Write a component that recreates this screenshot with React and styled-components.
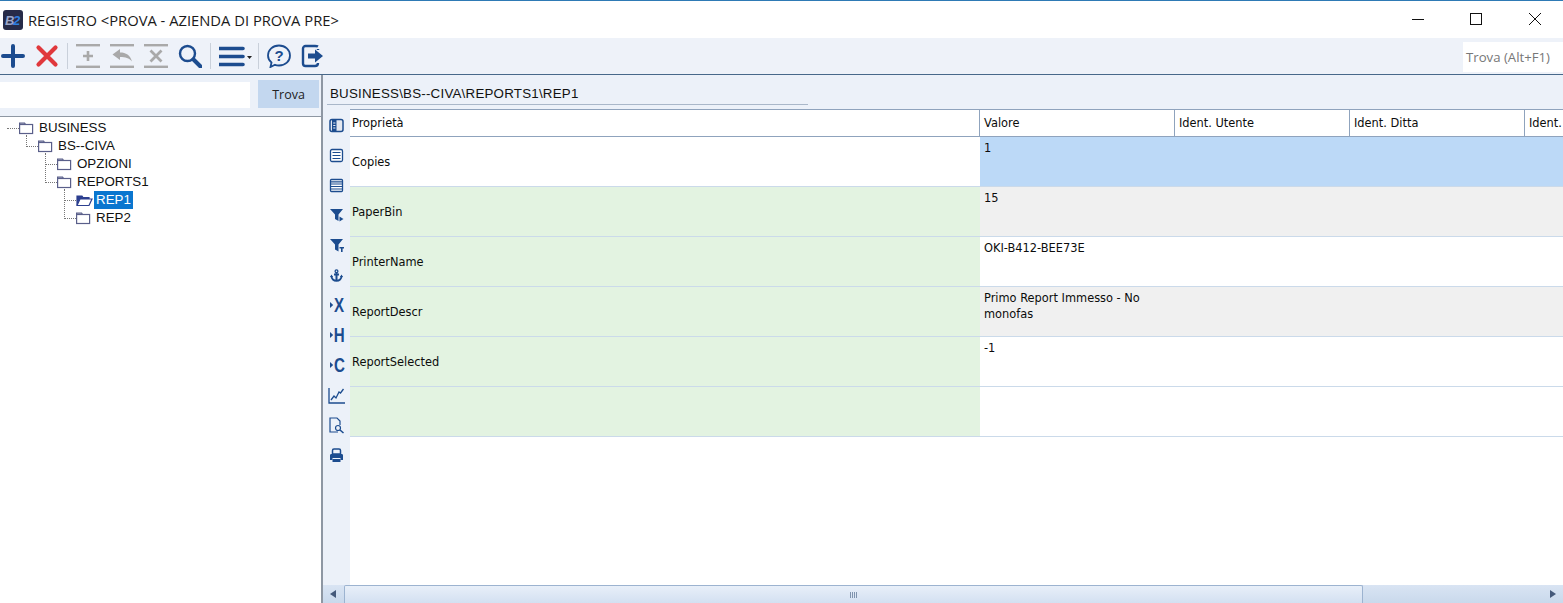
import React from "react";
import styled, { createGlobalStyle } from "styled-components";

const Global = createGlobalStyle`
  html, body { margin: 0; padding: 0; background: #fff; }
  * { box-sizing: border-box; }
`;
const Page = styled.div`
  width: 1563px; height: 603px; overflow: hidden; display: flex; flex-direction: column;
  background: #fff; border-top: 1px solid #2e7ab5; font-family: "Liberation Sans", sans-serif; color: #111;
`;
const TitleBar = styled.header`
  height: 37px; flex: none; display: flex; align-items: center; padding-left: 3px; background: #fff;
`;
const Logo = styled.svg`width: 20px; height: 20px; flex: none; margin-top: 1px;`;
const Title = styled.div`
  margin-left: 5px; font: 14.75px "Open Sans", sans-serif; color: #1a1a1a; flex: 1; white-space: nowrap;
`;
const WinBtn = styled.svg`width: 58px; height: 14px; flex: none; margin-top: -1px;`;
const Toolbar = styled.div`
  height: 37px; flex: none; display: flex; align-items: center; background: #eef2f9;
  border-bottom: 1px solid #47688a; position: relative;
`;
const Group = styled.div`display: flex; margin-left: ${p => p.$ml || 0}px;`;
const Tool = styled.div`
  width: ${p => p.$w || 34}px; height: 36px; display: flex; align-items: center; justify-content: center; flex: none;
`;
const Sep = styled.div`width: 1px; height: 26px; background: #c9d0da; flex: none; margin: 0 ${p => p.$m ?? 3}px;`;
const FindBox = styled.div`
  margin-left: auto; width: 100px; height: 30px; background: #fff; color: #777;
  font: 13.2px "Open Sans", sans-serif; padding: 6px 3px; white-space: nowrap; align-self: flex-start; margin-top: 4px;
`;
const Main = styled.div`flex: 1; min-height: 0; display: flex;`;
const Left = styled.aside`
  width: 323px; flex: none; display: flex; flex-direction: column; border-right: 2px solid #8e97a3; background: #fff;
`;
const SearchRow = styled.div`
  height: 42px; flex: none; background: #ecf1f9; border-bottom: 1px solid #8e97a3; display: flex; align-items: flex-start;
  padding-top: 5px;
`;
const SearchInput = styled.div`width: 250px; height: 26px; margin-top: 2px; background: #fff;`;
const TrovaBtn = styled.div`
  width: 61px; height: 28px; margin-left: 8px; background: #c3d7ef; color: #222;
  font: 12.5px "Open Sans", sans-serif; display: flex; align-items: center; justify-content: center; padding-top: 1px;
`;
const Tree = styled.div`padding: 2px 0 0; flex: 1;`;
const Node = styled.div`
  position: relative; height: 18px; display: flex; align-items: center; padding-left: ${p => 19 + p.$lvl * 19}px;
`;
const Connector = styled.span`
  position: absolute; left: ${p => (p.$lvl === 0 ? 7 : 7 + p.$lvl * 19)}px; width: 12px;
  bottom: 8px; height: ${p => p.$reach}px; border-bottom: 1px dotted #777;
  border-left: ${p => (p.$lvl === 0 ? "none" : "1px dotted #777")};
`;
const Label = styled.span`
  font-size: 13.33px; line-height: 18px; padding: 0 2px 0 ${p => (p.$sel ? 2 : 0)}px;
  margin-left: ${p => (p.$sel ? 1 : 3)}px; white-space: nowrap;
  background: ${p => (p.$sel ? "#0a76cf" : "transparent")}; color: ${p => (p.$sel ? "#fff" : "#111")};
`;
const Right = styled.section`flex: 1; min-width: 0; display: flex; flex-direction: column; background: #ecf1f9;`;
const PathRow = styled.div`height: 34px; flex: none; padding: 10px 0 0 4px;`;
const PathText = styled.div`
  width: 481px; height: 20px; border-bottom: 1px solid #a9b7c9; font-size: 13.33px; line-height: 18px;
  padding-left: 3px; color: #111; letter-spacing: 0.22px;
`;
const Body = styled.div`flex: 1; min-height: 0; display: flex; position: relative;`;
const Side = styled.div`width: 27px; flex: none; display: flex; flex-direction: column; padding-top: 1px;`;
const SideBtn = styled.div`height: 30px; display: flex; align-items: center; justify-content: center; flex: none;`;
const Sheet = styled.div`flex: 1; min-width: 0; background: #fff; overflow: hidden; font: 11.4px "DejaVu Sans", sans-serif; color: #0c0c0c;`;
const Row = styled.div`display: grid; grid-template-columns: 630px 195px 175px 175px 38px; width: 1213px;`;
const HeadRow = styled(Row)`height: 28px; border-top: 1px solid #8fa3bd; border-bottom: 1px solid #8fa3bd; background: #fff;`;
const HeadCell = styled.div`
  line-height: 26px; border-right: ${p => (p.$last ? "none" : "1px solid #8fa3bd")}; white-space: nowrap; padding-left: ${p => (p.$first ? 2 : 4)}px;
`;
const DataRow = styled(Row)`height: 50px; border-bottom: 1px solid #cbdaea;`;
const Prop = styled.div`
  background: ${p => (p.$plain ? "#fff" : "#e3f3e1")}; padding-left: 2px; display: flex; align-items: center;
`;
const Val = styled.div`
  grid-column: 2 / -1; background: ${p => p.$bg}; padding: 3px 0 0 4px; line-height: 16px;
  display: grid; grid-template-columns: 185px;
`;
const Scroll = styled.div`
  position: absolute; left: 0; right: 0; bottom: 0; height: 18px; background: linear-gradient(#d9e4f3, #c9d9ec);
  display: flex; align-items: center;
`;
const ArrowBtn = styled.svg`width: 21px; height: 18px; flex: none; margin-left: ${p => (p.$end ? "auto" : 0)};`;
const Thumb = styled.div`
  width: 1019px; height: 18px; border: 1px solid #9cb3d0; border-bottom: none; border-radius: 2px 2px 0 0;
  background: linear-gradient(#e8eff9, #d3e0f1); display: flex; align-items: center; justify-content: center; gap: 1px;
`;
const Grip = styled.i`width: 1px; height: 6px; background: #7f93ad; display: block;`;
const FolderSvg = styled.svg`width: 17px; height: 14px; flex: none;`;

const B = "#1c4c8f", G = "#a9a9a9";

const Svg = ({ s = 24, children }) => (
  <svg width={s} height={s} viewBox="0 0 24 24">{children}</svg>
);
const Rails = () => (<><rect x="0" y="0" width="24" height="2.4" fill={G} /><rect x="0" y="21.6" width="24" height="2.4" fill={G} /></>);

const tb = {
  plus: <Svg><path d="M12 2v20M2 12h20" stroke={B} strokeWidth="4" strokeLinecap="round" /></Svg>,
  del: <Svg><path d="M3.5 3.5l17 17M20.5 3.5l-17 17" stroke="#e0383c" strokeWidth="4.2" strokeLinecap="round" /></Svg>,
  add: <Svg><Rails /><path d="M12 7v10M7 12h10" stroke={G} strokeWidth="2.6" /></Svg>,
  undo: <Svg><Rails /><path d="M2.5 10.500L10 5v3.500c6 0 10 2.500 12 9-3-3.500-6.500-4.500-12-4.500V16z" fill={G} /></Svg>,
  cancel: <Svg><Rails /><path d="M6.500 6.500l11 11M17.500 6.500l-11 11" stroke={G} strokeWidth="2.800" /></Svg>,
  search: <Svg><circle cx="9.500" cy="9.500" r="7.500" fill="none" stroke={B} strokeWidth="2.400" /><path d="M15.500 15.500l7 7" stroke={B} strokeWidth="4" strokeLinecap="round" /></Svg>,
  help: <Svg><path d="M12 1.500c6.300 0 11 4.300 11 10s-4.700 10-11 10c-1.500 0-2.800-.2-4-.7L3.500 23l1-4.500C2.300 16.700 1 14.300 1 11.500c0-5.700 4.700-10 11-10z" fill="none" stroke={B} strokeWidth="1.800" /><text x="12" y="17" textAnchor="middle" fontFamily="Liberation Sans" fontWeight="700" fontSize="15" fill={B}>?</text></Svg>,
  exit: <Svg><path d="M14 2H4.500A2.500 2.500 0 0 0 2 4.500v15A2.500 2.500 0 0 0 4.500 22H14c2 0 3-1 3-3" fill="none" stroke={B} strokeWidth="2.400" /><path d="M17 2.500c-.5-.3-1.500-.5-3-.5M17 5v1" stroke={B} strokeWidth="2.400" fill="none" /><path d="M7 9.500h7V5.500l8 6.500-8 6.500v-4H7z" fill={B} /></Svg>,
};

const Letter = ({ c, x }) => (
  <svg width="26" height="26" viewBox="0 0 26 26">
    <path d="M6 10l3.200 3L6 16z" fill={B} />
    <text x={x} y="20" transform="scale(.72 1)" fontFamily="Liberation Sans" fontWeight="700" fontSize="21" fill={B}>{c}</text>
  </svg>
);

const side = [
  <svg width="15" height="15" viewBox="0 0 15 15"><rect x="1" y="1.500" width="13" height="12" rx="2" fill="#e4e8f0" stroke={B} strokeWidth="1.500" /><rect x="3" y="2" width="4.500" height="11" fill={B} /><path d="M4.200 5h2.200M4.200 7.500h2.200M4.200 10h2.200" stroke="#e9eef7" /></svg>,
  <svg width="15" height="15" viewBox="0 0 15 15"><rect x="1.500" y="1.500" width="12" height="12" rx="1.500" fill="#fff" stroke={B} strokeWidth="1.300" /><path d="M3.500 4.500h8M3.500 7.500h8M3.500 10.500h8" stroke={B} /></svg>,
  <svg width="15" height="15" viewBox="0 0 15 15"><rect x="1.500" y="1.500" width="12" height="12" rx="1" fill="#fff" stroke={B} strokeWidth="1.300" /><path d="M2 3.800h11M2 6h11M2 8.500h11M2 11h11" stroke={B} strokeWidth="1.200" /></svg>,
  <svg width="14" height="14" viewBox="0 0 14 14"><path d="M0 1h13L8.500 6.500V13L5 11V6.500z" fill={B} /><path d="M9.500 8.500l4 2.500-4 2.500z" fill={B} /></svg>,
  <svg width="14" height="14" viewBox="0 0 14 14"><path d="M0 1h13L8.500 6.500V13.500L5 11.500V6.500z" fill={B} /><path d="M9.500 9H14v1.500h-1.400V14H11v-3.500H9.500z" fill={B} /></svg>,
  <svg width="13" height="13" viewBox="0 0 13 13"><circle cx="6.500" cy="2.200" r="1.400" fill="none" stroke={B} strokeWidth="1.300" /><path d="M6.500 3.500v8.500M4 5.500h5" stroke={B} strokeWidth="2" /><path d="M1.500 7c0 3 2.200 4.800 5 4.800s5-1.800 5-4.800" fill="none" stroke={B} strokeWidth="2" /><path d="M0 8l1.500-2.500L3 8zM10 8l1.500-2.500L13 8z" fill={B} /></svg>,
  <Letter c="X" x="14" />,
  <Letter c="H" x="13.500" />,
  <Letter c="C" x="14" />,
  <svg width="17" height="17" viewBox="0 0 17 17"><path d="M1 1v15h16" fill="none" stroke={B} strokeWidth="1.300" /><path d="M3 13l3-4 2 2 3-6 1.500 1 3-4" fill="none" stroke={B} strokeWidth="1.300" /></svg>,
  <svg width="17" height="17" viewBox="0 0 17 17"><path d="M10 15H2V1h7l3 3v4" fill="none" stroke={B} strokeWidth="1.200" /><circle cx="10" cy="11" r="2.500" fill="none" stroke={B} strokeWidth="1.200" /><path d="M12 13l3.500 3" stroke={B} strokeWidth="1.600" /></svg>,
  <svg width="15" height="15" viewBox="0 0 15 15"><path d="M3.500 6V2.500C3.500 1.500 4 1 5 1h5c1 0 1.500.5 1.500 1.500V6z" fill="none" stroke={B} strokeWidth="1.500" /><path d="M1 7.500C1 6.500 1.500 6 2.500 6h10c1 0 1.500.5 1.500 1.500V12h-2.500v-2h-8v2H1z" fill={B} /><rect x="3.500" y="11" width="8" height="3" fill={B} /></svg>,
];

const Folder = ({ open }) => open ? (
  <FolderSvg viewBox="0 0 17 14">
    <path d="M1 12V3h5l1 1.500h6V6" fill="#2c3f8f" stroke="#2c3f8f" strokeWidth="1.200" />
    <path d="M1 12.500L4 6h12l-3 6.500z" fill="#fff" stroke="#2c3f8f" strokeWidth="1.200" />
  </FolderSvg>
) : (
  <FolderSvg viewBox="0 0 17 14">
    <path d="M.6 3.500V2.200h5l1 1.300" fill="none" stroke="#5a5f8a" strokeWidth="1.200" />
    <rect x=".6" y="3.500" width="13" height="9" fill="#fff" stroke="#5a5f8a" strokeWidth="1.200" />
  </FolderSvg>
);

const nodes = [
  { t: "BUSINESS", l: 0, r: 1 },
  { t: "BS--CIVA", l: 1, r: 12 },
  { t: "OPZIONI", l: 2, r: 12 },
  { t: "REPORTS1", l: 2, r: 30 },
  { t: "REP1", l: 3, r: 12, sel: true },
  { t: "REP2", l: 3, r: 30 },
];

const rows = [
  { p: "Copies", v: "1", bg: "#bcd9f7", plain: true },
  { p: "PaperBin", v: "15", bg: "#f0f0f0" },
  { p: "PrinterName", v: "OKI-B412-BEE73E", bg: "#fff" },
  { p: "ReportDescr", v: "Primo Report Immesso - No monofas", bg: "#f0f0f0" },
  { p: "ReportSelected", v: "-1", bg: "#fff" },
  { p: "", v: "", bg: "#fff" },
];

export default function App() {
  return (
    <Page>
      <Global />
      <TitleBar>
        <Logo viewBox="0 0 20 20">
          <rect width="20" height="20" rx="3" fill="#272b48" />
          <text x="2" y="15" fontFamily="Liberation Sans" fontStyle="italic" fontWeight="700" fontSize="13" fill="#9aa6c8">B</text>
          <text x="10" y="15" fontFamily="Liberation Sans" fontStyle="italic" fontWeight="700" fontSize="13" fill="#2f7fe0">2</text>
        </Logo>
        <Title>REGISTRO &lt;PROVA - AZIENDA DI PROVA PRE&gt;</Title>
        <WinBtn viewBox="0 0 58 14"><path d="M23 7.500h12" stroke="#111" /></WinBtn>
        <WinBtn viewBox="0 0 58 14"><rect x="23.500" y="1.500" width="11" height="11" fill="none" stroke="#111" /></WinBtn>
        <WinBtn viewBox="0 0 58 14"><path d="M24 1l12 12M36 1L24 13" stroke="#111" /></WinBtn>
      </TitleBar>
      <Toolbar>
        <Group $ml={-4}><Tool>{tb.plus}</Tool><Tool>{tb.del}</Tool></Group>
        <Sep />
        <Group><Tool>{tb.add}</Tool><Tool>{tb.undo}</Tool><Tool>{tb.cancel}</Tool><Tool>{tb.search}</Tool></Group>
        <Sep />
        <Tool $w={44}>
          <svg width="34" height="24" viewBox="0 0 34 24">
            <path d="M0 4.500h24M0 12.500h24M0 20.500h24" stroke={B} strokeWidth="3.600" strokeLinecap="round" />
            <path d="M28 12h5l-2.500 3z" fill="#222" />
          </svg>
        </Tool>
        <Sep $m={0} />
        <Group $ml={3}><Tool>{tb.help}</Tool><Tool>{tb.exit}</Tool></Group>
        <FindBox>Trova (Alt+F1)</FindBox>
      </Toolbar>
      <Main>
        <Left>
          <SearchRow><SearchInput /><TrovaBtn>Trova</TrovaBtn></SearchRow>
          <Tree>
            {nodes.map(n => (
              <Node key={n.t} $lvl={n.l}>
                <Connector $lvl={n.l} $reach={n.r} />
                <Folder open={n.sel} />
                <Label $sel={n.sel}>{n.t}</Label>
              </Node>
            ))}
          </Tree>
        </Left>
        <Right>
          <PathRow><PathText>BUSINESS\BS--CIVA\REPORTS1\REP1</PathText></PathRow>
          <Body>
            <Side>{side.map((ic, i) => <SideBtn key={i}>{ic}</SideBtn>)}</Side>
            <Sheet>
              <HeadRow>
                <HeadCell $first>Proprietà</HeadCell>
                <HeadCell>Valore</HeadCell>
                <HeadCell>Ident. Utente</HeadCell>
                <HeadCell>Ident. Ditta</HeadCell>
                <HeadCell $last>Ident.</HeadCell>
              </HeadRow>
              {rows.map((r, i) => (
                <DataRow key={i}>
                  <Prop $plain={r.plain}>{r.p}</Prop>
                  <Val $bg={r.bg}><span>{r.v}</span></Val>
                </DataRow>
              ))}
            </Sheet>
            <Scroll>
              <ArrowBtn viewBox="0 0 21 18"><path d="M13 5v8l-6-4z" fill="#44597a" /></ArrowBtn>
              <Thumb><Grip /><Grip /><Grip /><Grip /></Thumb>
              <ArrowBtn $end viewBox="0 0 21 18"><path d="M8 5v8l6-4z" fill="#44597a" /></ArrowBtn>
            </Scroll>
          </Body>
        </Right>
      </Main>
    </Page>
  );
}
